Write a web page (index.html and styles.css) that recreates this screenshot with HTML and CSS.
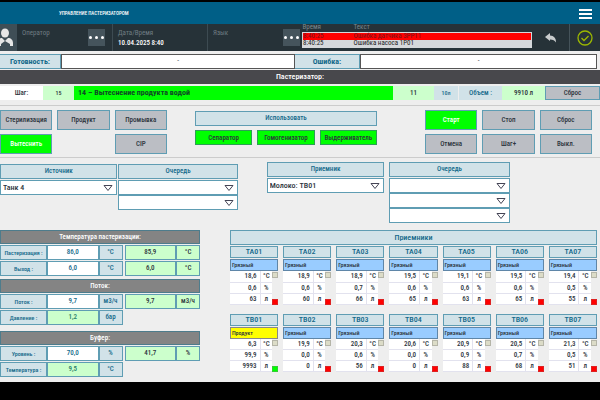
FILE: index.html
```html
<!DOCTYPE html>
<html lang="ru">
<head>
    <meta charset="UTF-8">
    <meta name="viewport" content="width=device-width, initial-scale=1.0">
    <title>Управление пастеризатором</title>
    <link rel="stylesheet" href="styles.css">
</head>
<body>
    <header class="topbar">
        <h1>УПРАВЛЕНИЕ ПАСТЕРИЗАТОРОМ</h1>
        <button class="menu" aria-label="Меню"><span></span><span></span><span></span></button>
    </header>

    <div class="status">
        <div class="avatar">
            <svg viewBox="0 0 17 26" width="17" height="26">
                <ellipse cx="5" cy="9" rx="4" ry="4.500" fill="#e6e6e6"/>
                <path d="M-2 22v-3c0-3 1-5 4-5l3 3 3-3c3 0 5 2 5 5v3h-3v-2l-5-3-4 3v2z" fill="#e6e6e6"/>
            </svg>
        </div>
        <div class="cell">
            <div class="info"><span>Оператор</span></div>
            <button class="dots" aria-label="Выбрать оператора"><i></i><i></i><i></i></button>
        </div>
        <div class="cell">
            <div class="info"><span>Дата/Время</span><b>10.04.2025 8:40</b></div>
        </div>
        <div class="cell lang">
            <div class="info"><span>Язык</span></div>
            <button class="dots" aria-label="Выбрать язык"><i></i><i></i><i></i></button>
        </div>
        <table class="alarms">
            <thead><tr><th>Время</th><th>Текст</th></tr></thead>
            <tbody>
                <tr class="active"><td>8:40:25</td><td>Ошибка датчика 3PP11</td></tr>
                <tr><td>8:40:25</td><td>Ошибка насоса 1P01</td></tr>
            </tbody>
        </table>
        <button class="icon back" aria-label="Назад">
            <svg viewBox="0 0 12 10" width="12" height="10"><path d="M0 4l5-4v2.400c4 .2 6 2.600 6 7-1.200-2-3-3-6-3V8z" fill="#c9cccd"/></svg>
        </button>
        <button class="icon ok" aria-label="Подтвердить">
            <svg viewBox="0 0 16 16" width="16" height="16" fill="none" stroke="#9cb800">
                <circle cx="8" cy="8" r="7" stroke-width="1.300"/>
                <path d="M4.500 8l2.500 2.500 4.500-4.500" stroke-width="1.300"/>
            </svg>
        </button>
    </div>

    <div class="ready">
        <span class="name">Готовность:</span><output>-</output>
        <span class="name">Ошибка:</span><output>-</output>
    </div>

    <h2 class="unit-title">Пастеризатор:</h2>

    <div class="step">
        <span class="white">Шаг:</span>
        <span class="pale small">15</span>
        <span class="current">14 – Вытеснение продукта водой</span>
        <span class="pale">11</span>
        <span class="blue small">10л</span>
        <span class="blue gap">Объем :</span>
        <span class="pale">9910 л</span>
        <button class="btn">Сброс</button>
    </div>

    <section class="controls">
        <div class="modes">
            <button class="btn">Стерилизация</button>
            <button class="btn">Продукт</button>
            <button class="btn">Промывка</button>
            <button class="btn on">Вытеснить</button>
            <button class="btn cip">CIP</button>
        </div>
        <div class="use">
            <h3 class="caption">Использовать</h3>
            <button class="opt">Сепаратор</button>
            <button class="opt">Гомогенизатор</button>
            <button class="opt">Выдерживатель</button>
        </div>
        <div class="actions">
            <button class="btn on">Старт</button>
            <button class="btn">Стоп</button>
            <button class="btn">Сброс</button>
            <button class="btn">Отмена</button>
            <button class="btn">Шаг+</button>
            <button class="btn">Выкл.</button>
        </div>
    </section>

    <section class="routes">
        <div class="route low">
            <h3 class="caption">Источник</h3>
            <select aria-label="Источник"><option>Танк 4</option></select>
        </div>
        <div class="route low">
            <h3 class="caption">Очередь</h3>
            <select aria-label="Очередь источника 1"><option></option></select>
            <select aria-label="Очередь источника 2"><option></option></select>
        </div>
        <div class="route dest">
            <h3 class="caption">Приемник</h3>
            <select aria-label="Приемник"><option>Молоко: TB01</option></select>
        </div>
        <div class="route">
            <h3 class="caption">Очередь</h3>
            <select aria-label="Очередь приемника 1"><option></option></select>
            <select aria-label="Очередь приемника 2"><option></option></select>
            <select aria-label="Очередь приемника 3"><option></option></select>
        </div>
    </section>

    <main class="bottom">
        <div class="params">
            <h3>Температура пастеризации:</h3>
            <table>
                <tr><th>Пастеризация :</th><td class="set">86,0</td><td class="u">°C</td><td class="sp"></td><td class="act">85,9</td><td class="act">°C</td></tr>
                <tr><th>Выход :</th><td class="set">6,0</td><td class="u">°C</td><td class="sp"></td><td class="act">6,0</td><td class="act">°C</td></tr>
            </table>
            <h3>Поток:</h3>
            <table>
                <tr><th>Поток :</th><td class="set">9,7</td><td class="u">м3/ч</td><td class="sp"></td><td class="act">9,7</td><td class="act">м3/ч</td></tr>
                <tr><th>Давление :</th><td class="calc">1,2</td><td class="u">бар</td><td class="sp"></td><td class="sp"></td><td class="sp"></td></tr>
            </table>
            <h3 class="buffer">Буфер:</h3>
            <table>
                <tr><th>Уровень :</th><td class="set">70,0</td><td class="u">%</td><td class="sp"></td><td class="act">41,7</td><td class="act">%</td></tr>
                <tr><th>Температура :</th><td class="calc">9,5</td><td class="u">°C</td><td class="sp"></td><td class="sp"></td><td class="sp"></td></tr>
            </table>
        </div>

        <div class="receivers">
            <h3 class="caption">Приемники</h3>
            <div class="tanks">
                <div class="tank"><h4>TA01</h4><p>Грязный</p><div class="data"><table><tr><td>18,6</td><td>°C</td></tr><tr><td>0,6</td><td>%</td></tr><tr><td>63</td><td>л</td></tr></table><div class="lamps"><i></i><i class="red"></i></div></div></div>
                <div class="tank"><h4>TA02</h4><p>Грязный</p><div class="data"><table><tr><td>18,9</td><td>°C</td></tr><tr><td>0,6</td><td>%</td></tr><tr><td>60</td><td>л</td></tr></table><div class="lamps"><i></i><i class="red"></i></div></div></div>
                <div class="tank"><h4>TA03</h4><p>Грязный</p><div class="data"><table><tr><td>18,9</td><td>°C</td></tr><tr><td>0,7</td><td>%</td></tr><tr><td>66</td><td>л</td></tr></table><div class="lamps"><i></i><i class="red"></i></div></div></div>
                <div class="tank"><h4>TA04</h4><p>Грязный</p><div class="data"><table><tr><td>19,5</td><td>°C</td></tr><tr><td>0,6</td><td>%</td></tr><tr><td>65</td><td>л</td></tr></table><div class="lamps"><i></i><i class="red"></i></div></div></div>
                <div class="tank"><h4>TA05</h4><p>Грязный</p><div class="data"><table><tr><td>19,1</td><td>°C</td></tr><tr><td>0,6</td><td>%</td></tr><tr><td>63</td><td>л</td></tr></table><div class="lamps"><i></i><i class="red"></i></div></div></div>
                <div class="tank"><h4>TA06</h4><p>Грязный</p><div class="data"><table><tr><td>19,5</td><td>°C</td></tr><tr><td>0,6</td><td>%</td></tr><tr><td>65</td><td>л</td></tr></table><div class="lamps"><i></i><i class="red"></i></div></div></div>
                <div class="tank"><h4>TA07</h4><p>Грязный</p><div class="data"><table><tr><td>19,4</td><td>°C</td></tr><tr><td>0,5</td><td>%</td></tr><tr><td>55</td><td>л</td></tr></table><div class="lamps"><i></i><i class="red"></i></div></div></div>

                <div class="tank"><h4>TB01</h4><p class="product">Продукт</p><div class="data"><table><tr><td>6,3</td><td>°C</td></tr><tr><td>99,9</td><td>%</td></tr><tr><td>9993</td><td>л</td></tr></table><div class="lamps"><i></i><i class="green"></i></div></div></div>
                <div class="tank"><h4>TB02</h4><p>Грязный</p><div class="data"><table><tr><td>19,9</td><td>°C</td></tr><tr><td>0,0</td><td>%</td></tr><tr><td>0</td><td>л</td></tr></table><div class="lamps"><i></i><i class="red"></i></div></div></div>
                <div class="tank"><h4>TB03</h4><p>Грязный</p><div class="data"><table><tr><td>20,3</td><td>°C</td></tr><tr><td>0,6</td><td>%</td></tr><tr><td>56</td><td>л</td></tr></table><div class="lamps"><i></i><i class="red"></i></div></div></div>
                <div class="tank"><h4>TB04</h4><p>Грязный</p><div class="data"><table><tr><td>20,6</td><td>°C</td></tr><tr><td>0,0</td><td>%</td></tr><tr><td>0</td><td>л</td></tr></table><div class="lamps"><i></i><i class="red"></i></div></div></div>
                <div class="tank"><h4>TB05</h4><p>Грязный</p><div class="data"><table><tr><td>20,9</td><td>°C</td></tr><tr><td>0,9</td><td>%</td></tr><tr><td>88</td><td>л</td></tr></table><div class="lamps"><i></i><i class="red"></i></div></div></div>
                <div class="tank"><h4>TB06</h4><p>Грязный</p><div class="data"><table><tr><td>20,5</td><td>°C</td></tr><tr><td>0,7</td><td>%</td></tr><tr><td>68</td><td>л</td></tr></table><div class="lamps"><i></i><i class="red"></i></div></div></div>
                <div class="tank"><h4>TB07</h4><p>Грязный</p><div class="data"><table><tr><td>21,3</td><td>°C</td></tr><tr><td>0,5</td><td>%</td></tr><tr><td>51</td><td>л</td></tr></table><div class="lamps"><i></i><i class="red"></i></div></div></div>
            </div>
        </div>
    </main>
</body>
</html>
```

FILE: styles.css
```css
:root {
    --line: #5f9db3;
    --head: #d1e2e8;
    --ink: #14698a;
    --grey: #bbbec4;
    --pale: #ccffcc;
    --go: #00ff00;
    --dark: #263238;
}
* {
    box-sizing: border-box;
}
html {
    background: #000;
}
body {
    margin: 0;
    padding-top: 2px;
    font-family: "Roboto Condensed", Roboto, sans-serif;
    font-size: 7px;
    line-height: 10px;
    color: #2c343c;
    white-space: nowrap;
}
h1, h2, h3, h4, p {
    margin: 0;
    font-size: 7px;
    font-weight: 500;
}
button, select {
    font: inherit;
    color: inherit;
    margin: 0;
    padding: 0;
    border: 0;
    border-radius: 0;
}
table {
    border-collapse: collapse;
    width: 100%;
    table-layout: fixed;
}
td, th {
    padding: 0;
}

/* header */
.topbar {
    height: 22px;
    display: flex;
    align-items: center;
    justify-content: space-between;
    padding: 0 8px 0 59px;
    background: #005f87;
}
.topbar h1 {
    font-size: 5px;
    color: #fff;
}
.menu {
    display: grid;
    gap: 2px;
    width: 13px;
    padding-top: 2px;
    background: none;
}
.menu span {
    height: 2px;
    background: #fff;
}

/* status bar */
.status {
    display: grid;
    grid-template-columns: 17px 96fr 95fr 94fr 230fr 37fr 31fr;
    height: 27px;
    background: var(--dark);
}
.avatar {
    background: #3f4e56;
    overflow: hidden;
}
.cell {
    display: flex;
    justify-content: space-between;
    align-items: center;
    padding: 0 7px 0 5px;
    border-right: 1px solid #3d4b52;
}
.cell.lang {
    padding-right: 2px;
    border-right: 0;
}
.info {
    align-self: start;
    padding-top: 4px;
    display: grid;
    color: #6f7c82;
}
.info b {
    color: #fff;
    font-weight: 500;
}
.dots {
    width: 17px;
    height: 17px;
    display: flex;
    gap: 3px;
    align-items: center;
    justify-content: center;
    background: #45545c;
}
.dots i {
    width: 3px;
    height: 3px;
    border-radius: 50%;
    background: #fff;
}
.alarms {
    align-self: start;
    line-height: 7px;
}
.alarms th {
    height: 8px;
    text-align: left;
    font-weight: normal;
    color: #7a868b;
}
.alarms th:first-child {
    width: 51px;
}
.alarms tbody {
    background: #d5d8db;
    color: #222;
    border: 1px solid #d5d8db;
}
.alarms .active {
    background: #f00;
    color: #7a1418;
}
.icon {
    display: flex;
    align-items: center;
    justify-content: center;
    background: none;
}
.ok {
    border-left: 1px solid #45535a;
}

/* readiness line */
.ready {
    display: grid;
    grid-template-columns: 61fr 234fr 65fr 237fr;
    padding: 3px 3px 1px 0;
    background: #eee;
    text-align: center;
    line-height: 13px;
}
.ready .name {
    background: var(--head);
    border: 1px solid var(--line);
    border-left: 0;
    font-size: 8px;
    font-weight: 700;
    color: var(--ink);
}
.ready output {
    background: #fff;
    border: 1px solid #555;
}
.unit-title {
    background: #48484c;
    color: #fff;
    text-align: center;
    font-size: 8px;
    line-height: 14px;
}

/* current step */
.step {
    display: grid;
    grid-template-columns: 43fr 31fr 319fr 41fr 24fr 44fr 43fr 55fr;
    padding: 2px 0 0;
    background: #eee;
    line-height: 14px;
    font-weight: 500;
    text-align: center;
}
.step .btn {
    line-height: 12px;
}
.step .white {
    background: #fff;
}
.step .pale {
    background: var(--pale);
}
.step .current {
    background: var(--go);
    color: #0f4a26;
    text-align: left;
    padding-left: 4px;
    font-size: 8px;
    font-weight: 700;
}
.step .blue {
    background: var(--head);
    color: var(--ink);
}
.step .gap {
    border-left: 1px solid #eee;
}
.step .small {
    font-size: 6px;
}

.btn {
    border: 1px solid var(--line);
    background: var(--grey);
    font-weight: 500;
}
.on {
    background: var(--go);
    color: #fff;
}
.caption {
    border: 1px solid var(--line);
    background: var(--head);
    color: var(--ink);
    line-height: 13px;
    text-align: center;
}

/* control buttons */
.controls {
    display: grid;
    grid-template-columns: 167fr 28fr 182fr 48fr 167fr;
    padding: 10px 8px 3px 0;
    background: linear-gradient(#ccc, #ccc) 0 5px / 100% 1px no-repeat #eee;
    border-bottom: 1px solid #ccc;
}
.modes, .actions {
    display: grid;
    grid-template-columns: repeat(3, 1fr);
    grid-auto-rows: 20px;
    gap: 4px 5px;
}
.actions {
    grid-column: 5;
}
.cip {
    grid-column: 3;
}
.use {
    grid-column: 3;
    display: grid;
    grid-template-columns: repeat(3, 1fr);
    grid-auto-rows: 15px;
    gap: 4px 5px;
    padding-top: 1px;
}
.use .caption {
    grid-column: 1 / 4;
}
.opt {
    background: var(--go);
    border: 1px solid #2d9f55;
    font-weight: 500;
}

/* routes */
.routes {
    display: grid;
    grid-template-columns: 117fr 119fr 149fr 120fr 89fr;
    column-gap: 1px;
    padding-top: 4px;
    background: #eee;
}
.route {
    display: grid;
    align-content: start;
}
.route .caption {
    margin-bottom: 1px;
}
.route.low {
    padding-top: 2px;
}
.route.dest {
    padding-left: 28px;
    padding-right: 4px;
}
select {
    appearance: none;
    width: 100%;
    height: 15px;
    padding-left: 2px;
    border: 1px solid var(--line);
    background: #fff url("data:image/svg+xml,%3Csvg xmlns='http://www.w3.org/2000/svg' width='10' height='6'%3E%3Cpath d='M1 .5h8L5 5.500z' fill='white' stroke='%23445'/%3E%3C/svg%3E") right 3px center no-repeat;
    font-size: 8px;
    font-weight: 500;
}

/* parameters and tanks */
.bottom {
    display: grid;
    grid-template-columns: 200fr 367fr;
    column-gap: 5%;
    padding: 7px 3px 4px 0;
    background: #eee;
}
.params h3 {
    border: 1px solid #4d7c8c;
    background: #848484;
    color: #fff;
    line-height: 12px;
    text-align: center;
    margin-top: 2px;
}
.params h3:first-child {
    margin-top: 0;
}
.params .buffer {
    margin-top: 5px;
}
.params table {
    border-collapse: separate;
    border-spacing: 0 1px;
    line-height: 13px;
    text-align: center;
    font-weight: 500;
}
.params th, .params td {
    border: 1px solid var(--line);
    height: 15px;
}
.params th {
    width: 47px;
    font-size: 6px;
    font-weight: 500;
    line-height: 12px;
    background: var(--head);
    color: var(--ink);
}
.params td:nth-child(3), .params td:nth-child(6) {
    width: 24px;
}
.params td.sp {
    border: 0;
}
.params td:nth-child(4) {
    width: 2px;
}
.set {
    background: #fff;
    color: var(--ink);
}
.u {
    background: var(--head);
    color: var(--ink);
}
.calc {
    background: var(--pale);
    color: #267d68;
}
.act {
    background: var(--pale);
}
.tanks {
    display: grid;
    grid-template-columns: repeat(7, 1fr);
    gap: 9px 5px;
    padding-top: 1px;
}
.receivers .caption, .tank h4 {
    font-size: 8px;
}
.tank h4 {
    border: 1px solid var(--line);
    background: var(--head);
    color: var(--ink);
    line-height: 10px;
    text-align: center;
}
.tank p {
    margin-top: 1px;
    padding-left: 1px;
    border: 1px solid #5f86a8;
    background: #99ccff;
    font-size: 6px;
    line-height: 10px;
}
.tank .product {
    background: #ff0;
    border-color: #888;
}
.data {
    display: grid;
    grid-template-columns: 1fr 6px;
}
.data table {
    background: #fff;
    text-align: right;
    font-weight: 500;
}
.data td {
    height: 11px;
    border-bottom: 1px solid #e2e2ee;
    line-height: 10px;
    padding-right: 3px;
}
.data td:last-child {
    width: 12px;
    padding: 0;
    text-align: center;
    border-left: 1px solid #e2e2ee;
}
.lamps {
    display: grid;
    align-content: space-between;
    padding-top: 1px;
}
.lamps i {
    height: 6px;
    border: 1px solid #b5b5a8;
    background: #dcdcc8;
}
.lamps .red {
    background: #f00;
    border-color: #d22;
}
.lamps .green {
    background: var(--go);
    border-color: #3c3;
}
```
